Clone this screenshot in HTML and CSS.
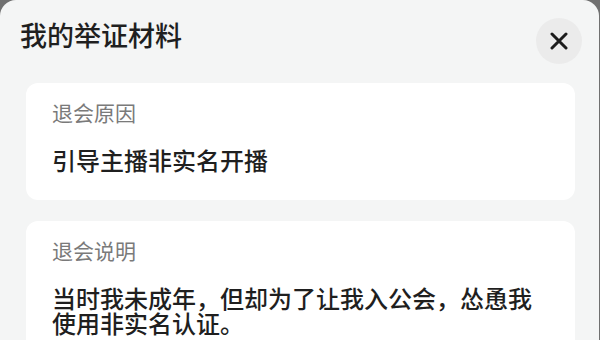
FILE: index.html
```html
<!DOCTYPE html>
<html lang="zh-CN">
<head>
<meta charset="utf-8">
<title>我的举证材料</title>
<link rel="stylesheet" href="styles.css">
</head>
<body>
<div class="sheet">
  <div class="header">
    <h1 class="title">我的举证材料</h1>
    <button class="close" aria-label="关闭">
      <svg width="18" height="18" viewBox="0 0 18 18"><path d="M2 2 L16 16 M16 2 L2 16" stroke="#1c1c1c" stroke-width="3" stroke-linecap="round" fill="none"/></svg>
    </button>
  </div>
  <div class="cards">
    <div class="card">
      <div class="label">退会原因</div>
      <div class="value">引导主播非实名开播</div>
    </div>
    <div class="card">
      <div class="label">退会说明</div>
      <div class="value">当时我未成年，但却为了让我入公会，怂恿我使用非实名认证。</div>
    </div>
  </div>
</div>
</body>
</html>
```

FILE: styles.css
```css
html, body {
  margin: 0;
  padding: 0;
  height: 100%;
}
body {
  background: #707070;
  font-family: "Noto Sans CJK SC", "Noto Sans", sans-serif;
  overflow: hidden;
}
.sheet {
  background: #f4f5f5;
  margin-right: 1px;
  min-height: 100%;
  border-radius: 16px 16px 0 0;
  padding: 18px 17px 0 20px;
  box-sizing: border-box;
}
.header {
  display: flex;
  justify-content: space-between;
  align-items: flex-start;
}
.title {
  margin: 3px 0 0 0;
  font-size: 27px;
  line-height: 27px;
  font-weight: 500;
  color: #1f1f1f;
}
.close {
  width: 46px;
  height: 46px;
  border-radius: 50%;
  border: none;
  background: #ebebeb;
  padding: 0;
  display: flex;
  align-items: center;
  justify-content: center;
}
.cards {
  margin: 19px 7px 0 6px;
  display: flex;
  flex-direction: column;
  gap: 21px;
}
.card {
  background: #ffffff;
  border-radius: 12px;
  padding: 19px 26px 28px 26px;
}
.label {
  font-size: 21px;
  line-height: 21px;
  color: #7a7a7a;
}
.value {
  margin-top: 24px;
  font-size: 24px;
  line-height: 25px;
  font-weight: 500;
  color: #1f1f1f;
}
```
